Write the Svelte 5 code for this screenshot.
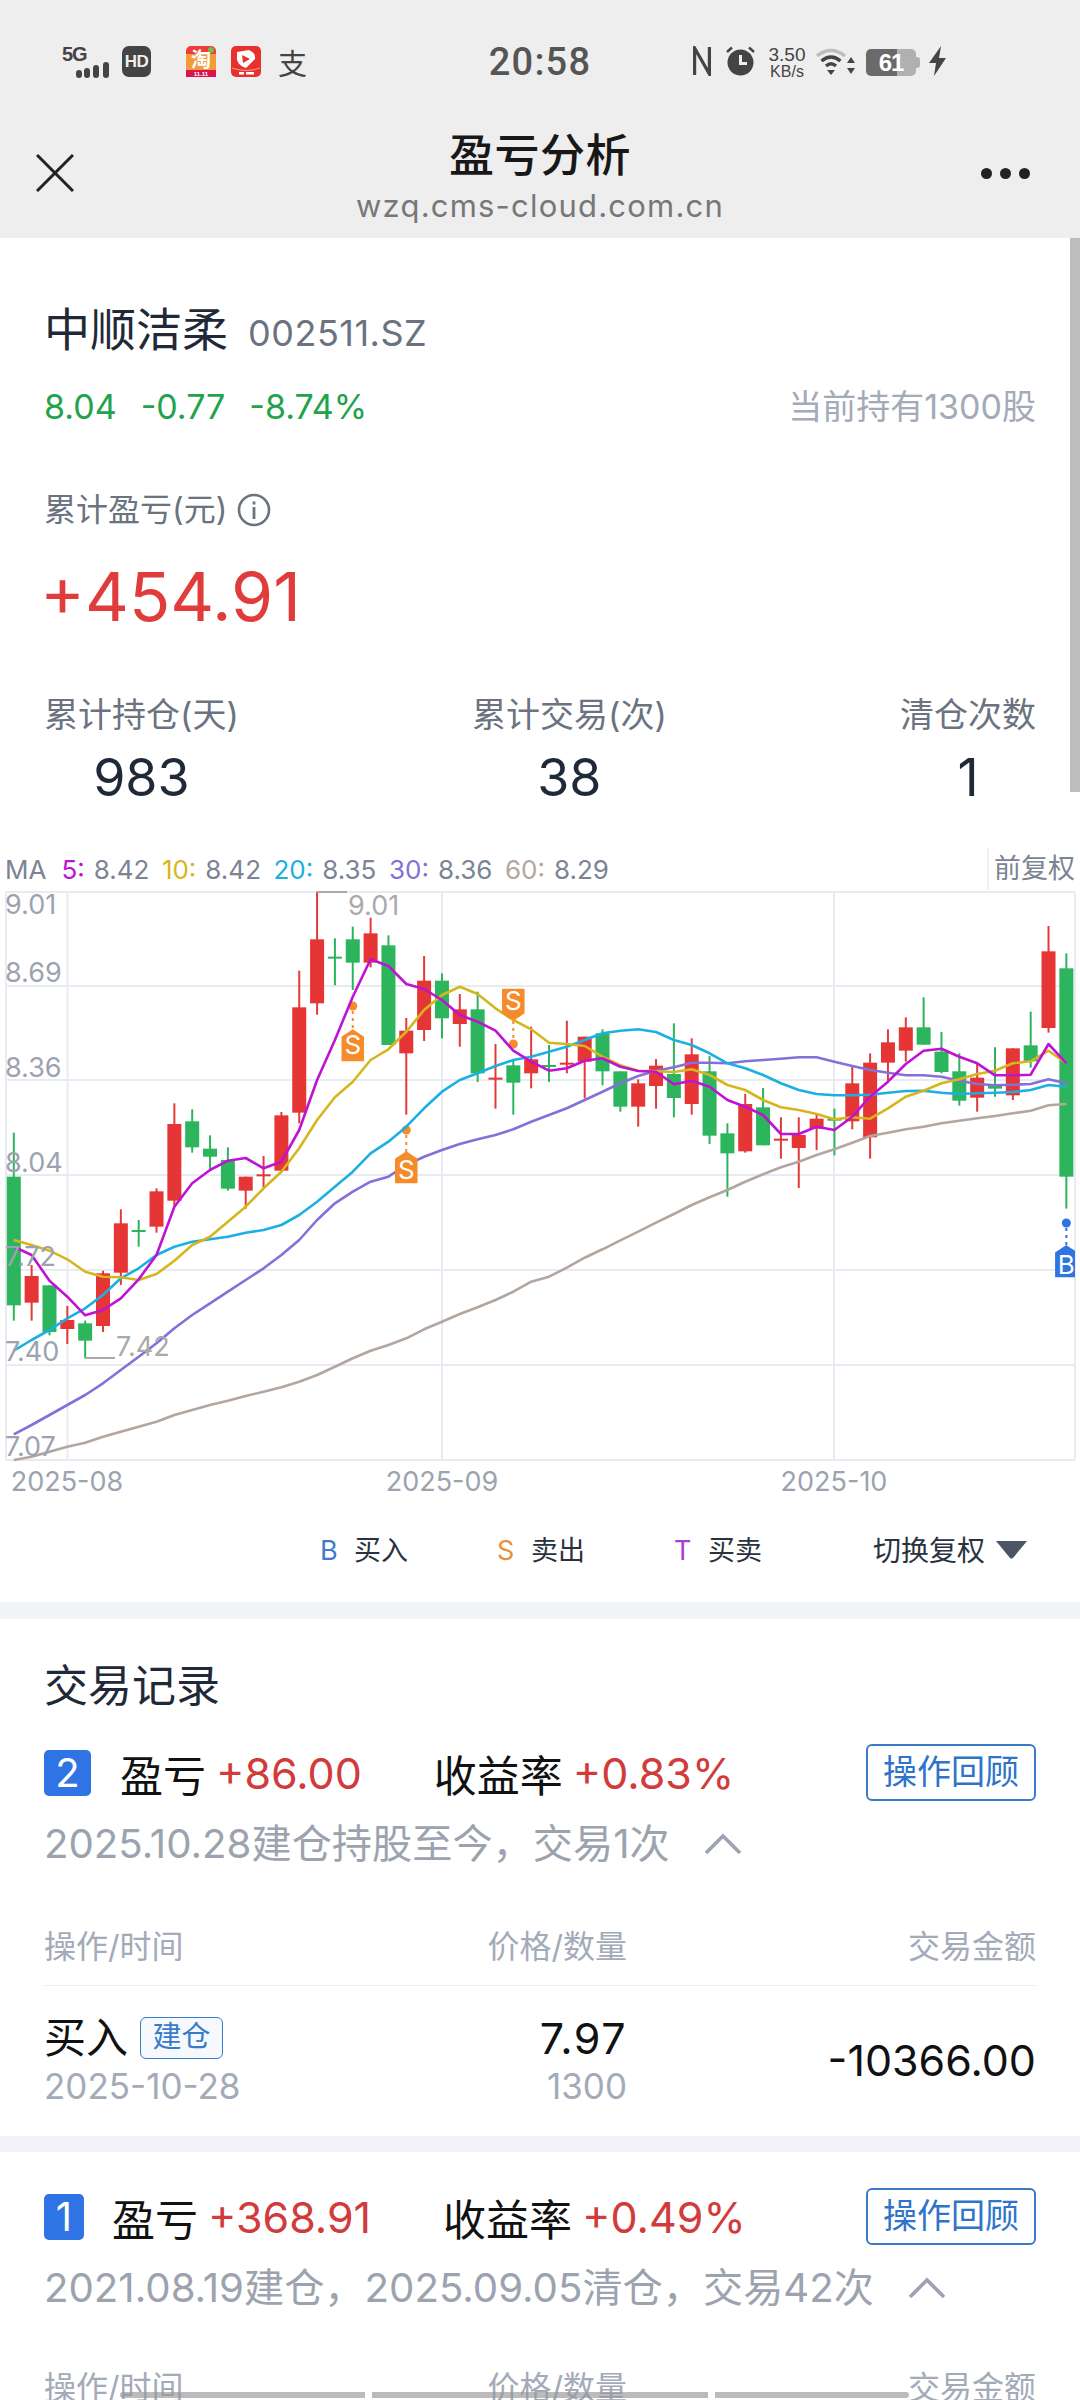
<script>
  const yr = (z) => 840 + z / 3;
  const cx = (i) => 13.8 + 17.84 * i;

  // [color, wickTop, bodyTop, bodyBottom, wickBottom] in crop units
  const candles = [
    ['g',878,1010,1396,1442],['r',1275,1308,1388,1442],['g',1336,1336,1476,1486],['r',1398,1440,1467,1512],
    ['g',1442,1450,1502,1555],['r',1292,1300,1458,1476],['r',1108,1150,1298,1335],['g',1140,1170,1176,1220],
    ['r',1045,1054,1160,1178],['r',790,852,1082,1098],['g',808,844,922,938],['g',886,926,950,990],
    ['g',922,960,1046,1052],['r',1010,1010,1052,1106],['r',948,1003,1009,1045],['r',816,826,992,992],
    ['r',392,502,818,850],['r',155,298,490,524],['g',295,350,355,436],['g',260,298,368,450],
    ['r',233,280,368,382],['g',286,316,615,615],['r',534,572,640,824],['r',348,422,570,603],
    ['g',400,422,535,595],['r',462,508,552,620],['g',455,508,700,726],['r',612,713,719,806],
    ['g',660,676,728,824],['r',560,658,700,745],['g',615,675,680,726],['r',542,668,674,700],
    ['r',590,590,665,775],['g',568,580,694,736],['g',694,694,800,815],['r',718,730,800,860],
    ['r',657,677,738,806],['g',550,702,774,832],['r',595,643,792,824],['g',648,694,887,912],
    ['g',850,880,940,1070],['r',762,792,934,938],['g',744,802,916,916],['r',832,896,901,956],
    ['r',832,885,924,1044],['r',820,836,866,930],['g',806,836,842,946],['r',680,730,844,868],
    ['r',640,668,892,956],['r',568,607,668,724],['r',532,562,632,665],['g',472,562,614,614],
    ['g',576,635,696,700],['g',640,694,782,797],['r',670,713,773,815],['g',622,735,746,770],
    ['r',625,625,766,780],['g',515,616,664,683],['r',258,334,564,578],['g',340,385,1010,1106]
  ];

  const ma5 = [1220,1245,1322,1370,1426,1410,1375,1318,1245,1100,1030,990,962,954,985,965,870,720,600,470,358,378,432,447,480,525,545,572,632,665,692,685,662,655,680,693,695,733,722,740,780,800,825,882,882,860,870,830,770,725,672,632,626,650,670,706,706,704,612,670];
  const ma10 = [1200,1215,1232,1258,1295,1310,1312,1320,1302,1262,1215,1190,1145,1100,1045,995,925,840,772,725,660,628,575,510,465,440,462,505,540,568,608,612,618,650,676,692,694,696,688,705,735,750,780,802,810,822,838,832,836,805,770,752,730,718,702,692,670,664,632,670];
  const ma20 = [1532,1500,1470,1435,1405,1365,1315,1285,1245,1220,1205,1198,1190,1178,1170,1155,1125,1085,1040,995,940,905,860,805,755,720,700,678,660,650,635,620,600,580,572,568,576,600,615,640,670,685,705,730,750,762,766,766,764,758,753,752,758,762,760,758,756,750,735,740];
  const ma30 = [1783,1755,1725,1695,1665,1630,1590,1550,1510,1465,1425,1390,1355,1320,1285,1245,1200,1140,1090,1055,1025,1010,975,950,930,912,898,885,868,845,825,805,780,755,730,708,692,682,668,668,670,664,660,656,652,652,665,678,690,698,706,706,710,722,732,736,734,732,718,730];
  const ma60 = [1860,1850,1835,1820,1808,1790,1775,1760,1745,1725,1710,1695,1682,1668,1655,1642,1625,1605,1580,1555,1532,1515,1495,1468,1445,1422,1402,1380,1355,1325,1310,1283,1253,1228,1201,1175,1148,1122,1095,1072,1050,1025,1003,982,965,945,928,908,888,878,868,860,850,842,835,828,820,812,796,792];
  const pts = (a) => a.map((z, i) => `${cx(i).toFixed(1)},${yr(z).toFixed(1)}`).join(' ');
  const lines = [
    { c: '#b3a69f', p: pts(ma60) }, { c: '#8470d8', p: pts(ma30) }, { c: '#1cb0e2', p: pts(ma20) },
    { c: '#d6b61e', p: pts(ma10) }, { c: '#c012d4', p: pts(ma5) }
  ];

  const gridY = [892, 986, 1080, 1175, 1270, 1365, 1460];
  const gridX = [6, 67.5, 442, 834, 1075];
  const yLabels = [['9.01',905],['8.69',973],['8.36',1068],['8.04',1163],['7.72',1257],['7.40',1352],['7.07',1447]];
  const xLabels = [['2025-08',67],['2025-09',442],['2025-10',834]];

  const ma = [
    { n: '5:', v: '8.42', c: '#c012d4' }, { n: '10:', v: '8.42', c: '#d6b61e' },
    { n: '20:', v: '8.35', c: '#1cb0e2' }, { n: '30:', v: '8.36', c: '#8470d8' },
    { n: '60:', v: '8.29', c: '#b3a69f' }
  ];

  // S tag: pentagon with tip up (up=true) or tip down, centred on x
  const tag = (x, tip, up) => {
    const d = up ? 1 : -1, h = 30.5, s = 7;
    return `M${x} ${tip} L${x + 10.5} ${tip + d * s} L${x + 10.5} ${tip + d * h} L${x - 10.5} ${tip + d * h} L${x - 10.5} ${tip + d * s} Z`;
  };
  const sMarks = [
    { x: cx(19), dot: 1006, from: 1011, to: 1030, tag: tag(cx(19), 1030, true), ty: 1046 },
    { x: cx(22), dot: 1130, from: 1135, to: 1152, tag: tag(cx(22), 1152, true), ty: 1171 },
    { x: cx(28), dot: 1044, from: 1021, to: 1040, tag: tag(cx(28), 1020, false), ty: 1002 }
  ];

  const trades = [
    { badge: '2', cls: 'wide', pnl: '+86.00', rate: '+0.83%', sub: '2025.10.28建仓持股至今，交易1次' },
    { badge: '1', cls: 'narrow', pnl: '+368.91', rate: '+0.49%', sub: '2021.08.19建仓，2025.09.05清仓，交易42次' }
  ];
</script>

<div class="page">
  <header class="top">
    <div class="status">
      <div class="st-left">
        <svg class="ic" width="50" height="32" viewBox="0 0 50 32">
          <text x="0" y="15" class="net">5G</text>
          <rect x="14" y="24" width="6" height="8" rx="3" fill="#444"/>
          <rect x="22" y="22" width="6" height="10" rx="3" fill="#444"/>
          <rect x="31" y="19" width="6" height="13" rx="3" fill="#444"/>
          <rect x="41" y="16" width="6" height="16" rx="3" fill="#444"/>
        </svg>
        <span class="hd">HD</span>
        <svg class="ic app" width="30" height="31" viewBox="0 0 30 31">
          <rect width="30" height="31" rx="5" fill="#ee3b3b"/>
          <rect y="8" width="30" height="17" fill="#f39a3a"/>
          <circle cx="25" cy="4" r="3" fill="#6fbf4a"/>
          <text x="15" y="21" class="tao">淘</text>
          <rect y="24" width="30" height="7" fill="#d9144e"/>
          <text x="15" y="30" class="dd">11.11</text>
        </svg>
        <svg class="ic app2" width="30" height="31" viewBox="0 0 30 31">
          <rect width="30" height="31" rx="5" fill="#e8302c"/>
          <path d="M6 6 L18 4 Q25 7 24 13 L15 22 Q8 20 6 14 Z" fill="#fff"/>
          <path d="M11 9 L19 13 L12 17 Z" fill="#e8302c"/>
          <path d="M1 22 Q15 27 29 22" fill="none" stroke="#f7a39b" stroke-width="1"/>
          <rect x="8" y="26" width="5" height="2.5" fill="#fff"/>
          <rect x="15" y="26" width="8" height="2.5" fill="#fff"/>
        </svg>
        <span class="zhi">支</span>
      </div>
      <div class="time">20:58</div>
      <div class="st-right">
        <svg width="18" height="30" viewBox="0 0 18 30"><path d="M1.600 29V2L16.400 28V1" fill="none" stroke="#444" stroke-width="3.2"/></svg>
        <svg class="alarm" width="31" height="30" viewBox="0 0 31 30">
          <circle cx="15.5" cy="16.5" r="13" fill="#444"/>
          <path d="M15.5 9v8.5h6.5" fill="none" stroke="#eee" stroke-width="3"/>
          <path d="M2 6l5-4.500M29 6l-5-4.500" stroke="#444" stroke-width="2.400"/>
        </svg>
        <div class="speed"><span>3.50</span><small>KB/s</small></div>
        <svg class="wifi" width="40" height="28" viewBox="0 0 40 28">
          <path d="M1 8 Q15 -3 29 8" fill="none" stroke="#bdbdbd" stroke-width="3.400"/>
          <path d="M5.500 13 Q15 5 24.500 13" fill="none" stroke="#444" stroke-width="3.400"/>
          <path d="M10 18 Q15 13.500 20 18" fill="none" stroke="#444" stroke-width="3.400"/>
          <path d="M11 22 H19 L15 27 Z" fill="#444"/>
          <path d="M31 15 h8 l-4-6 Z M31 20 h8 l-4 6 Z" fill="#444"/>
        </svg>
        <div class="battery"><span class="lvl">61</span></div>
        <svg class="bolt" width="19" height="30" viewBox="0 0 19 30"><path d="M13 0 L1 17 H8 L6 30 L18 12 H11 Z" fill="#444"/></svg>
      </div>
    </div>
    <nav class="nav">
      <svg class="close" width="38" height="38" viewBox="0 0 38 38"><path d="M1 1L37 37M37 1L1 37" stroke="#222" stroke-width="3"/></svg>
      <div class="nav-title">
        <h1>盈亏分析</h1>
        <p>wzq.cms-cloud.com.cn</p>
      </div>
      <div class="dots"><i></i><i></i><i></i></div>
    </nav>
  </header>

  <section class="summary">
    <div class="name"><span class="cn">中顺洁柔</span><span class="code">002511.SZ</span></div>
    <div class="quote">
      <div class="q-g"><span>8.04</span><span>-0.77</span><span>-8.74%</span></div>
      <div class="hold">当前持有1300股</div>
    </div>
    <div class="pl-label">
      累计盈亏(元)
      <svg width="34" height="34" viewBox="0 0 34 34">
        <circle cx="17" cy="17" r="15" fill="none" stroke="#6b7280" stroke-width="2.600"/>
        <rect x="15.600" y="14" width="2.800" height="12" fill="#6b7280"/>
        <rect x="15.600" y="8.500" width="2.800" height="3" fill="#6b7280"/>
      </svg>
    </div>
    <div class="pl">+454.91</div>
    <div class="stats">
      <div><span>累计持仓(天)</span><b>983</b></div>
      <div><span>累计交易(次)</span><b>38</b></div>
      <div><span>清仓次数</span><b>1</b></div>
    </div>
  </section>

  <section class="chart">
    <div class="ma">
      <span class="ma-t">MA</span>
      {#each ma as m}
        <span class="ma-i"><em style="color:{m.c}">{m.n}</em><span>{m.v}</span></span>
      {/each}
      <span class="adj">前复权</span>
    </div>
    <svg class="plot" width="1080" height="610" viewBox="0 890 1080 610">
      <defs><clipPath id="pc"><rect x="0" y="880" width="1075" height="620"/></clipPath></defs>
      {#each gridY as y}<line x1="6" x2="1075" y1={y} y2={y} class="grid"/>{/each}
      {#each gridX as x}<line x1={x} x2={x} y1="892" y2="1460" class="grid"/>{/each}

      {#each candles as c, i}
        <line x1={cx(i)} x2={cx(i)} y1={yr(c[1])} y2={yr(c[4])} stroke={c[0] === 'r' ? '#e23a38' : '#2cb45c'} stroke-width="2"/>
        <rect x={cx(i) - 7} y={yr(c[2])} width="14" height={Math.max(2, (c[3] - c[2]) / 3)} fill={c[0] === 'r' ? '#e53535' : '#2cb55c'}/>
      {/each}

      {#each sMarks as m}
        <circle cx={m.x} cy={m.dot} r="4.500" fill="#f58b2b"/>
        <line x1={m.x} x2={m.x} y1={m.from} y2={m.to} stroke="#f58b2b" stroke-width="2" stroke-dasharray="3 4"/>
      {/each}

      {#each lines as l}
        <polyline points={l.p} fill="none" stroke={l.c} stroke-width="2.600" stroke-linejoin="round"/>
      {/each}

      {#each sMarks as m}
        <path d={m.tag} fill="#f58b2b" stroke="#f58b2b" stroke-width="1.500" stroke-linejoin="round"/>
        <text x={m.x} y={m.ty + 8} class="mark">S</text>
      {/each}

      <g clip-path="url(#pc)">
        <circle cx={cx(59)} cy="1223" r="4.500" fill="#2f74e4"/>
        <line x1={cx(59)} x2={cx(59)} y1="1228" y2="1245" stroke="#2f74e4" stroke-width="2" stroke-dasharray="3 4"/>
        <path d={tag(cx(59), 1246, true)} fill="#2f74e4" stroke="#2f74e4" stroke-width="1.500"/>
        <text x={cx(59)} y="1274" class="mark">B</text>
      </g>

      <path d="M317 892H347" stroke="#aaa" stroke-width="2" fill="none"/>
      <path d="M85 1358H115" stroke="#aaa" stroke-width="2" fill="none"/>
      <text x="348" y="915" class="note">9.01</text>
      <text x="116" y="1356" class="note">7.42</text>
      {#each yLabels as l}<text x="5" y={l[1] + 9} class="yl">{l[0]}</text>{/each}
      {#each xLabels as l}<text x={l[1]} y="1491" class="xl">{l[0]}</text>{/each}
    </svg>
    <div class="legend">
      <span class="lk b">B</span><span class="lt">买入</span>
      <span class="lk s">S</span><span class="lt">卖出</span>
      <span class="lk t">T</span><span class="lt">买卖</span>
      <span class="lt sw">切换复权</span>
      <svg width="33" height="19" viewBox="0 0 33 19"><path d="M1 1H32L18 18Q16.500 19 15 18Z" fill="#4b5563"/></svg>
    </div>
  </section>

  {#each trades as t, n}
    <section class="record" class:second={n === 1}>
      {#if n === 0}<h2>交易记录</h2>{/if}
      <div class="r-head {t.cls}">
        <span class="badge">{t.badge}</span>
        <span class="rk">盈亏</span><span class="rv">{t.pnl}</span>
        <span class="rk r2">收益率</span><span class="rv">{t.rate}</span>
        <span class="btn">操作回顾</span>
      </div>
      <div class="r-sub">
        <span>{t.sub}</span>
        <svg width="38" height="22" viewBox="0 0 38 22"><path d="M2 20L19 3L36 20" fill="none" stroke="#9ca3af" stroke-width="3.600"/></svg>
      </div>
      <div class="tbl-h"><span>操作/时间</span><span class="ra">价格/数量</span><span class="ra">交易金额</span></div>
      {#if n === 0}
        <div class="tbl-r">
          <div><div class="act">买入<span class="tg">建仓</span></div><div class="mut">2025-10-28</div></div>
          <div class="ra"><div class="act price">7.97</div><div class="mut">1300</div></div>
          <div class="ra amt">-10366.00</div>
        </div>
      {/if}
    </section>
  {/each}

  <div class="sb"></div>
  <div class="hb"><i class="h1"></i><i class="h2"></i><i class="h3"></i></div>
</div>

<style>
  :global(body) { margin: 0; background: #fff; }
  .page {
    position: relative; width: 1080px; height: 2400px; overflow: hidden; background: #fff;
    font-family: Inter, "Noto Sans CJK SC", sans-serif; color: #1f2937;
  }
  .top { background: #eee; height: 238px; }
  .status {
    height: 108px; box-sizing: border-box; padding: 46px 62px 0;
    display: grid; grid-template-columns: 1fr auto 1fr; align-items: start;
  }
  .ic { overflow: visible; }
  .st-left { display: flex; align-items: flex-start; }
  .net { font: 700 20px "Liberation Sans", sans-serif; fill: #444; letter-spacing: -1px; }
  .hd {
    margin-left: 10px; width: 29px; height: 31px; border-radius: 7px; background: #444; color: #eee;
    font: 700 17px/31px "Liberation Sans", sans-serif; text-align: center; letter-spacing: -.5px;
  }
  .app { margin-left: 35px; }
  .app2 { margin-left: 15px; }
  .tao { font: 700 20px "Noto Sans CJK SC", sans-serif; fill: #fff; text-anchor: middle; }
  .dd { font: 700 6px "Liberation Sans", sans-serif; fill: #fff; text-anchor: middle; }
  .zhi { margin-left: 17px; font: 400 29px/32px "Noto Sans CJK SC", sans-serif; color: #444; }
  .time { font: 500 38px/32px Roboto, sans-serif; color: #555; letter-spacing: 1.200px; }
  .st-right { display: flex; align-items: flex-start; justify-content: flex-end; padding-right: 71px; }
  .alarm { margin-left: 14px; }
  .speed { margin-left: 12px; width: 38px; color: #444; font-family: "Liberation Sans", sans-serif; text-align: center; display: flex; flex-direction: column; }
  .speed span { font-size: 19px; line-height: 18px; }
  .speed small { font-size: 16px; line-height: 15px; }
  .wifi { margin-left: 10px; margin-top: 2px; }
  .battery {
    margin-left: 10px; margin-top: 3px; width: 50px; height: 27px; border-radius: 5px; position: relative;
    background: linear-gradient(90deg, #6a6a6a 0 62%, #b0b0b0 62%);
    font: 700 24px/27px "Liberation Sans", sans-serif; color: #fff; text-align: center;
  }
  .battery::after { content: ""; position: absolute; right: -4px; top: 8px; width: 4px; height: 11px; background: #b0b0b0; border-radius: 0 3px 3px 0; }
  .lvl { letter-spacing: -1px; }
  .bolt { margin-left: 12px; }

  .nav { height: 130px; position: relative; display: flex; justify-content: space-between; align-items: center; padding: 0 50px 0 36px; }
  .nav-title { position: absolute; left: 0; right: 0; top: 20px; text-align: center; }
  .nav-title h1 { margin: 0; font: 500 45px/50px "Noto Sans CJK SC", sans-serif; color: #181818; letter-spacing: .5px; }
  .nav-title p { margin: 8px 0 0; font: 400 31px/40px Inter, sans-serif; color: #777; letter-spacing: 1.200px; }
  .close { display: block; }
  .dots { display: flex; gap: 8px; }
  .dots i { width: 11px; height: 11px; border-radius: 50%; background: #222; }

  .summary { padding: 66px 44px 40px; }
  .name { display: flex; align-items: baseline; height: 50px; line-height: 50px; }
  .cn { font-size: 46px; color: #1f2937; }
  .code { margin-left: 20px; font-size: 36px; color: #6b7280; letter-spacing: .5px; }
  .quote { margin-top: 33px; height: 40px; line-height: 40px; display: flex; justify-content: space-between; }
  .q-g { display: flex; gap: 24px; color: #22a24a; font-size: 34px; }
  .hold { color: #a3aab8; font-size: 34px; }
  .pl-label { margin-top: 63px; height: 40px; line-height: 40px; font-size: 32px; color: #6b7280; display: flex; align-items: center; gap: 10px; }
  .pl { margin: 26px 0 0 -4px; font-size: 68px; line-height: 80px; color: #e03c3c; }
  .stats { margin-top: 57px; display: flex; justify-content: space-between; }
  .stats div { display: flex; flex-direction: column; align-items: center; }
  .stats span { font-size: 34px; line-height: 44px; color: #6b7280; }
  .stats b { margin-top: 11px; font-size: 52px; line-height: 60px; font-weight: 400; color: #1f2937; }

  .ma { height: 42px; display: flex; align-items: center; padding-left: 5px; font-size: 26px; color: #7b8494; }
  .ma-t { margin-right: 15px; }
  .ma-i { display: flex; margin-right: 12.500px; gap: 9px; }
  .ma-i em { font-style: normal; }
  .adj { margin-left: auto; border-left: 2px solid #eeeff3; height: 42px; line-height: 42px; padding-left: 5px; padding-right: 5px; font-size: 27px; }
  .plot { display: block; }
  .grid { stroke: #e9ebf2; stroke-width: 2; }
  .mark { font: 400 26px Inter, sans-serif; fill: #fff; text-anchor: middle; }
  .note { font: 400 27px Inter, sans-serif; fill: #aaa; }
  .yl { font: 400 27px Inter, sans-serif; fill: #9ca3af; }
  .xl { font: 400 27px Inter, sans-serif; fill: #9ca3af; text-anchor: middle; }

  .legend { height: 102px; box-sizing: border-box; padding: 34px 0 0 320px; display: flex; align-items: flex-start; font-size: 27px; line-height: 34px; }
  .lk { width: 17px; margin-right: 17px; }
  .b { color: #3f7ad0; } .s { color: #e8913c; } .t { color: #a83cd8; }
  .lt { color: #2a3240; margin-right: 89px; }
  .lt.sw { margin: 0 10px 0 22px; font-size: 28px; }
  .legend svg { margin-top: 6px; }

  .record { border-top: 17px solid #f3f4f8; padding: 0 44px; height: 534px; box-sizing: border-box; }
  .record.second { border-top-width: 16px; height: 264px; padding-top: 36px; }
  h2 { margin: 37px 0 28px; font-size: 44px; font-weight: 400; line-height: 60px; color: #1f2937; }
  .r-head { height: 57px; display: flex; align-items: center; }
  .badge { height: 46px; border-radius: 5px; background: #2f74e4; color: #fff; font-size: 40px; line-height: 46px; text-align: center; }
  .wide .badge { width: 47px; margin-right: 29px; }
  .narrow .badge { width: 40px; margin-right: 28px; }
  .rk { font-size: 43px; color: #111; }
  .rv { font-size: 43px; color: #d13b3b; margin-left: 10px; }
  .rk.r2 { margin-left: 72px; }
  .btn { margin-left: auto; width: 170px; height: 57px; box-sizing: border-box; border: 2px solid #3a7bc8; border-radius: 6px; color: #2f74c8; font-size: 34px; line-height: 52px; text-align: center; }
  .r-sub { margin-top: 18px; height: 50px; line-height: 50px; font-size: 40.200px; color: #9ca3af; display: flex; align-items: center; gap: 34px; }
  .tbl-h { margin-top: 58px; padding-bottom: 18px; border-bottom: 1px solid #eaecef; display: grid; grid-template-columns: 380px 203px 1fr; font-size: 32px; line-height: 40px; color: #a3aab8; }
  .second .tbl-h { margin-top: 55px; }
  .ra { text-align: right; }
  .tbl-r { padding-top: 28px; display: grid; grid-template-columns: 380px 203px 1fr; align-items: center; }
  .act { font-size: 42px; line-height: 48px; color: #111; display: flex; align-items: center; }
  .ra .act { justify-content: flex-end; }
  .price { letter-spacing: 1.500px; font-size: 43px; }
  .tg { margin-left: 12px; width: 83px; height: 42px; box-sizing: border-box; border: 1.500px solid #3a7bc8; border-radius: 6px; background: #f5f9fe; color: #3a7bc8; font-size: 29px; line-height: 38px; text-align: center; }
  .mut { margin-top: 4px; font-size: 35px; line-height: 40px; color: #a3aab8; }
  .amt { font-size: 43px; color: #111; }

  .sb { position: absolute; right: 0; top: 238px; width: 10px; height: 554px; background: #bdbdbd; }
  .hb { position: absolute; left: 0; top: 2392px; width: 1080px; height: 6px; }
  .hb i { position: absolute; top: 0; height: 6px; background: rgba(150,150,150,.65); }
  .h1 { left: 120px; width: 245px; border-radius: 3px 0 0 3px; }
  .h2 { left: 372px; width: 336px; }
  .h3 { left: 715px; width: 194px; border-radius: 0 3px 3px 0; }
</style>
